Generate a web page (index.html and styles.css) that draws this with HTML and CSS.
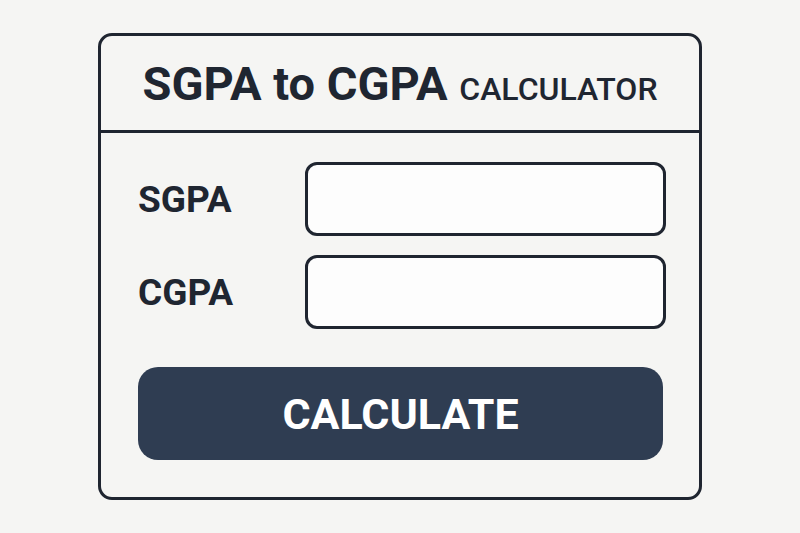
FILE: index.html
```html
<!DOCTYPE html>
<html lang="en">
<head>
    <meta charset="UTF-8">
    <meta name="viewport" content="width=device-width, initial-scale=1.0">
    <title>SGPA to CGPA Calculator</title>
    <link rel="stylesheet" href="styles.css">
</head>
<body>
    <div class="card">
        <header class="card-header">
            <h1>SGPA to CGPA <span class="small">CALCULATOR</span></h1>
        </header>

        <div class="card-body">
            <div class="field">
                <label for="sgpa">SGPA</label>
                <input type="text" id="sgpa">
            </div>
            <div class="field">
                <label for="cgpa">CGPA</label>
                <input type="text" id="cgpa">
            </div>

            <button id="calc-btn">CALCULATE</button>
        </div>
    </div>
</body>
</html>
```

FILE: styles.css
```css
body {
    font-family: 'Roboto', 'Liberation Sans', Arial, sans-serif;
    background-color: #f5f5f3;
    color: #1f2631;
    margin: 0;
    padding: 33px 0 0;
}

.card {
    width: 604px;
    height: 467px;
    box-sizing: border-box;
    margin: 0 0 0 98px;
    border: 3px solid #1f2530;
    border-radius: 14px;
    background-color: #f5f5f3;
    display: flex;
    flex-direction: column;
}

.card-header {
    height: 94px;
    border-bottom: 3px solid #1f2530;
    display: flex;
    align-items: center;
    justify-content: center;
}

h1 {
    margin: 0;
    font-size: 47px;
    font-weight: bold;
}

h1 .small {
    font-size: 32px;
    font-weight: 500;
}

.card-body {
    padding: 29px 33px 0 37px;
    display: flex;
    flex-direction: column;
}

.field {
    display: flex;
    align-items: center;
    margin-bottom: 19px;
}

.field label {
    width: 167px;
    font-size: 37px;
    font-weight: bold;
}

.field input {
    width: 361px;
    height: 74px;
    box-sizing: border-box;
    border: 3px solid #1f2530;
    border-radius: 12px;
    background-color: #fdfdfd;
}

#calc-btn {
    margin-top: 19px;
    width: 525px;
    height: 93px;
    border: none;
    border-radius: 20px;
    background-color: #2f3d52;
    color: #ffffff;
    font-family: 'Roboto', 'Liberation Sans', Arial, sans-serif;
    font-size: 43px;
    font-weight: bold;
    padding: 0;
}
```
